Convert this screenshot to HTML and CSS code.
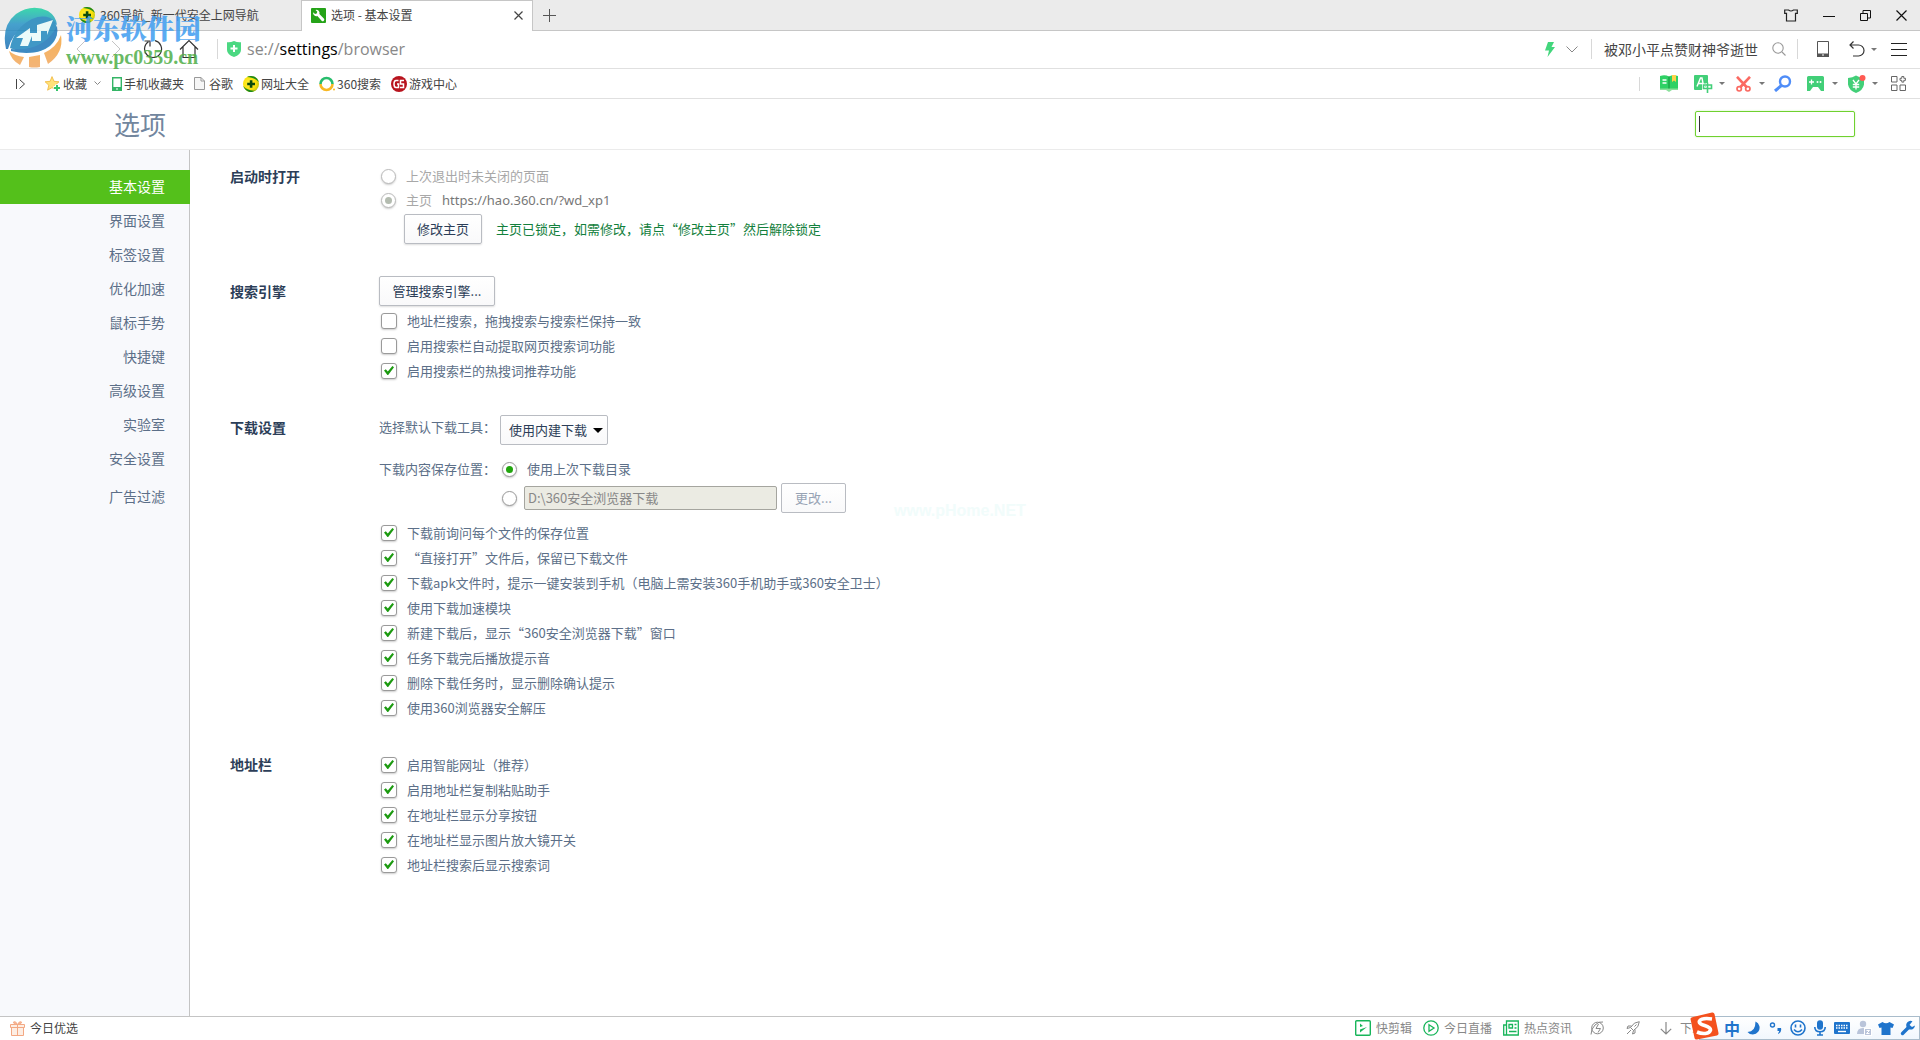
FILE: index.html
```html
<!DOCTYPE html>
<html lang="zh-CN">
<head>
<meta charset="utf-8">
<title>选项 - 基本设置</title>
<link rel="stylesheet" href="styles.css">
</head>
<body>
<svg class="defs" aria-hidden="true">
  <defs>
    <radialGradient id="yel" cx=".4" cy=".45" r=".6"><stop offset="0" stop-color="#fff13a"/><stop offset=".7" stop-color="#fbe00a"/><stop offset="1" stop-color="#c8c814"/></radialGradient>
    <linearGradient id="globe" x1="0" y1="0" x2="0" y2="1"><stop offset="0" stop-color="#1fd6a0"/><stop offset=".4" stop-color="#2a94c8"/><stop offset="1" stop-color="#1c6fb4"/></linearGradient>
    <linearGradient id="sun" x1="0" y1="0" x2="0" y2="1"><stop offset="0" stop-color="#f5a43a"/><stop offset="1" stop-color="#f2a860"/></linearGradient>
    <symbol id="nav360" viewBox="0 0 16 16"><circle cx="8" cy="8" r="8" fill="url(#yel)"/><path d="M4 1.100A8 8 0 0 1 15.800 6C13 2.500 8 1.500 4 1.100z" fill="#1c8a1c"/><path d="M.3 10A8 8 0 0 0 12.500 14.600C7 15 2.500 13 .3 10z" fill="#1c8a1c"/><path d="M6.800 4.200h2.600v2.600H12v2.400H9.400v2.600H6.800V9.200H4.200V6.800h2.600z" fill="#0c4a0c"/></symbol>
  </defs>
</svg>

<header class="tabbar">
  <div class="tab tab-idle">
    <svg width="16" height="16"><use href="#nav360"/></svg>
    <span>360导航_新一代安全上网导航</span>
  </div>
  <div class="tab tab-active">
    <svg width="15" height="15" viewBox="0 0 15 15"><rect width="15" height="15" rx="1" fill="#25a318"/><path d="M2.200 4.200a3.300 3.300 0 0 0 4.200 3.900l4.200 4.600a1.500 1.500 0 0 0 2.200-2.200L8.400 6.100a3.300 3.300 0 0 0-3.900-4.200l1.800 1.900-.6 1.700-1.700.5z" fill="#fff"/></svg>
    <span>选项 - 基本设置</span>
    <button class="icon-btn tab-close" aria-label="关闭标签"><svg width="9" height="9" viewBox="0 0 9 9"><path d="M.5.5l8 8M8.500.5l-8 8" stroke="#444" stroke-width="1.200"/></svg></button>
  </div>
  <button class="icon-btn new-tab" aria-label="新标签"><svg width="13" height="13" viewBox="0 0 13 13"><path d="M6.500 0v13M0 6.500h13" stroke="#555"/></svg></button>
  <div class="window-btns">
    <button class="icon-btn" aria-label="皮肤"><svg width="14" height="13" viewBox="0 0 14 13" fill="none" stroke="#222" stroke-width="1.200"><path d="M.7 1H4.500Q7 3 9.500 1h3.800v3.400h-1.800v7.600h-9V4.400H.7z"/></svg></button>
    <button class="icon-btn" aria-label="最小化"><svg width="12" height="11" viewBox="0 0 12 11"><path d="M0 6.500h12" stroke="#111"/></svg></button>
    <button class="icon-btn" aria-label="还原"><svg width="11" height="11" viewBox="0 0 11 11" fill="none" stroke="#111"><path d="M.5 3.500h7v7h-7zM3 3.500v-3h7.500v7.500h-3"/></svg></button>
    <button class="icon-btn" aria-label="关闭"><svg width="11" height="11" viewBox="0 0 11 11"><path d="M.5.5l10 10M10.500.5l-10 10" stroke="#111" stroke-width="1.200"/></svg></button>
  </div>
</header>

<div class="addressbar">
  <div class="nav-btns">
    <button class="icon-btn" aria-label="后退"><svg width="10" height="18" viewBox="0 0 10 18" fill="none" stroke="#c4c4c4"><path d="M9 1L1 9l8 8"/></svg></button>
    <button class="icon-btn" aria-label="前进"><svg width="10" height="18" viewBox="0 0 10 18" fill="none" stroke="#c4c4c4"><path d="M1 1l8 8-8 8"/></svg></button>
    <button class="icon-btn" aria-label="刷新"><svg width="20" height="20" viewBox="0 0 20 20" fill="none" stroke="#333" stroke-width="1.200"><path d="M12 1.700A8.500 8.500 0 1 1 5.500 2.800M1.500 2H7v5.500"/></svg></button>
    <button class="icon-btn" aria-label="主页"><svg width="20" height="20" viewBox="0 0 20 20" fill="none" stroke="#333" stroke-width="1.200"><path d="M1 10.500L10 1.500l9 9M4 8v10.500h12V8"/></svg></button>
  </div>
  <label class="url">
    <svg width="14" height="16" viewBox="0 0 14 16"><path d="M0 1.200Q3.500 1.600 7 0q3.500 1.600 7 1.200V9q0 4.500-7 7-7-2.500-7-7z" fill="#4bd882"/><path d="M7 4v7M3.500 7.500h7" stroke="#fff" stroke-width="2"/></svg>
    <span>se://<b>settings</b>/browser</span>
  </label>
  <div class="address-tools">
    <button class="icon-btn bolt" aria-label="极速模式"><svg width="10" height="15" viewBox="0 0 10 15"><path d="M3 0h6L6.500 5H10L2.500 15 4 8.500H0z" fill="#42d67c"/></svg></button>
    <button class="icon-btn drop" aria-label="展开"><svg width="12" height="7" viewBox="0 0 12 7" fill="none" stroke="#888"><path d="M.5.5L6 6 11.500.5"/></svg></button>
    <i class="bar-sep"></i>
    <span class="hot-word">被邓小平点赞财神爷逝世</span>
    <button class="icon-btn find" aria-label="搜索"><svg width="14" height="14" viewBox="0 0 14 14" fill="none" stroke="#999" stroke-width="1.100"><circle cx="6" cy="6" r="5.200"/><path d="M10 10l3.500 3.500"/></svg></button>
    <i class="bar-sep"></i>
    <button class="icon-btn phone" aria-label="手机"><svg width="12" height="16" viewBox="0 0 12 16"><path d="M.5.500h11v15H.5z" fill="none" stroke="#555"/><path d="M0 12.500h12V16H0z" fill="#555"/><path d="M5 14h2" stroke="#fff"/></svg></button>
    <button class="icon-btn undo" aria-label="恢复"><svg width="16" height="16" viewBox="0 0 16 16" fill="none" stroke="#333" stroke-width="1.200"><path d="M4.500.5L1 4l3.500 3.500M1 4h8.500a5.500 5.500 0 0 1 0 11H4"/></svg></button>
    <i class="caret"></i>
    <button class="icon-btn menu" aria-label="菜单"><svg width="16" height="13" viewBox="0 0 16 13"><path d="M0 .5h16M0 6.500h16M0 12.500h16" stroke="#222"/></svg></button>
  </div>
</div>

<nav class="bookmarks">
  <button class="icon-btn fold" aria-label="收起"><svg width="10" height="12" viewBox="0 0 10 12" fill="none" stroke="#444"><path d="M.5 1v10M3.500 1.500L8.500 6l-5 4.500"/></svg></button>
  <a href="#" class="fav"><svg width="16" height="16" viewBox="0 0 16 16"><path d="M7 .6l2 4.700 5 .5-3.800 3.400 1.200 5L7 11.600l-4.400 2.600 1.200-5L.1 5.800l5-.5z" fill="#ffe27a" stroke="#f0b53a" stroke-width=".8"/><path d="M12 8.500v7M8.500 12h7" stroke="#fff" stroke-width="4"/><path d="M12 9v6M9 12h6" stroke="#35c46a" stroke-width="2"/></svg>收藏</a>
  <svg class="fav-drop" width="7" height="5" viewBox="0 0 7 5" fill="none" stroke="#888"><path d="M.5.500l3 3 3-3"/></svg>
  <a href="#" class="mobile"><svg width="10" height="14" viewBox="0 0 10 14"><path d="M.7.700h8.600v12.600H.7z" fill="#fff" stroke="#35b566" stroke-width="1.400"/><path d="M0 10h10v4H0z" fill="#35b566"/><path d="M4 12h2" stroke="#fff"/></svg>手机收藏夹</a>
  <a href="#" class="doc"><svg width="11" height="13" viewBox="0 0 11 13" fill="#f6f6f6" stroke="#999"><path d="M.5.500h6.500l3.500 3.500v8.500H.5zM7 .5V4h3.500"/></svg>谷歌</a>
  <a href="#"><svg width="16" height="16"><use href="#nav360"/></svg>网址大全</a>
  <a href="#"><svg width="16" height="16" viewBox="0 0 16 16" fill="none" stroke-width="2.600"><path d="M1.500 8a6 6 0 1 1 12 0" stroke="#28bd6c"/><path d="M1.500 8a6 6 0 0 0 12 0" stroke="#f8b824"/><circle cx="15" cy="13.500" r="1" fill="#f8b824" stroke="none"/></svg>360搜索</a>
  <a href="#"><svg width="16" height="16" viewBox="0 0 16 16"><circle cx="8" cy="8" r="8" fill="#b8141e"/><path d="M7.500 4.500H5Q3 4.500 3 8t2 3.500h2.500V8H6M13 4.500H9.500V8h3v3.500H9" fill="none" stroke="#fff" stroke-width="1.500"/></svg>游戏中心</a>
  <div class="ext">
    <i class="bar-sep short"></i>
    <button class="icon-btn e-book" aria-label="小说"><svg width="18" height="17" viewBox="0 0 18 17"><path d="M0 1q5-1.500 9 .5 4-2 9-.5v13h-6q-2 0-3 2-1-2-3-2H0z" fill="#2fd165"/><path d="M0 13.500h18V15h-6l-3 2-3-2H0z" fill="#8be09c"/><path d="M9 1.500v12" stroke="#14913c" stroke-width="1"/><path d="M2.500 5h4M2.500 8h4" stroke="#fff" stroke-width="1.400"/><path d="M12 0h4v7l-2-1.500L12 7z" fill="#ffd24a"/></svg></button>
    <button class="icon-btn e-trans" aria-label="翻译"><svg width="19" height="18" viewBox="0 0 19 18" fill="none"><rect width="14" height="15" rx="1" fill="#42cf78"/><path d="M3 11.500L6.500 3h1.500l1.500 8M4.500 8.500h5" stroke="#fff" stroke-width="1.400"/><path d="M13.500 8v10M9.500 10h8v3.500h-8z" stroke="#fff" stroke-width="3"/><path d="M13.500 7.500V18M9.500 10h8v3.500h-8z" stroke="#42cf78" stroke-width="1.600"/></svg></button>
    <i class="caret"></i>
    <button class="icon-btn e-cut" aria-label="截图"><svg width="15" height="16" viewBox="0 0 15 16" fill="none" stroke="#fb6a62"><path d="M1 .8L11 11.500M14 .8L4 11.500" stroke-width="2.600"/><circle cx="3.200" cy="12.800" r="2.200" stroke-width="1.700"/><circle cx="11.800" cy="12.800" r="2.200" stroke-width="1.700"/></svg></button>
    <i class="caret"></i>
    <button class="icon-btn e-mag" aria-label="放大镜"><svg width="18" height="17" viewBox="0 0 18 17" fill="none" stroke="#4f8df8"><circle cx="11" cy="6.500" r="5" stroke-width="2.400"/><path d="M7.300 10.500L1 16" stroke-width="3"/></svg></button>
    <button class="icon-btn e-game" aria-label="游戏"><svg width="17" height="15" viewBox="0 0 17 15"><path d="M1.500 0h14Q17 0 17 1.500V15h-3l-3-4H6l-3 4H0V1.500Q0 0 1.500 0z" fill="#42cf78"/><path d="M4.500 3.500v5M2 6h5" stroke="#fff" stroke-width="1.300"/><circle cx="10.500" cy="6" r="1" fill="#fff"/><circle cx="13.500" cy="6" r="1" fill="#fff"/></svg></button>
    <i class="caret"></i>
    <button class="icon-btn e-pay" aria-label="网购先赔"><svg width="18" height="18" viewBox="0 0 18 18"><path d="M0 3q4.500-.3 8-2.500Q11.500 2.700 16 3v6.500Q15 15.500 8 18 1 15.500 0 9.500z" fill="#42cf78"/><path d="M5 5l3 4 3-4M8 9v5.500M4.800 9.500h6.400M4.800 12h6.400" fill="none" stroke="#fff" stroke-width="1.300"/><circle cx="14.500" cy="3" r="3" fill="#ff5a52"/></svg></button>
    <i class="caret"></i>
    <button class="icon-btn e-grid" aria-label="扩展中心"><svg width="15" height="15" viewBox="0 0 15 15" fill="none" stroke="#666"><path d="M.5.500h5.500V6H.5zM.5 9h5.500v5.500H.5zM9 9h5.500v5.500H9zM10.800.500h2v1.800h1.800v2h-1.800v1.800h-2V4.300H9v-2h1.800z"/></svg></button>
  </div>
</nav>

<header class="page-head">
  <h1>选项</h1>
  <input class="search" type="search" aria-label="搜索设置">
</header>

<div class="body">
  <aside class="sidebar">
    <a href="#" class="current">基本设置</a>
    <a href="#">界面设置</a>
    <a href="#">标签设置</a>
    <a href="#">优化加速</a>
    <a href="#">鼠标手势</a>
    <a href="#">快捷键</a>
    <a href="#">高级设置</a>
    <a href="#">实验室</a>
    <a href="#">安全设置</a>
    <a href="#" class="extra">广告过滤</a>
  </aside>

  <main class="content">
    <section>
      <h2>启动时打开</h2>
      <div>
        <label class="radio-row muted"><input type="radio" name="start" disabled>上次退出时未关闭的页面</label>
        <label class="radio-row muted"><input type="radio" name="start" disabled checked>主页<span class="home-url">https://hao.360.cn/?wd_xp1</span></label>
        <div class="home-row"><button class="btn">修改主页</button><span class="hint">主页已锁定，如需修改，请点“修改主页”然后解除锁定</span></div>
      </div>
    </section>

    <section>
      <h2 class="tall">搜索引擎</h2>
      <div>
        <button class="btn wide">管理搜索引擎...</button>
        <div class="checks after-btn">
          <label><input type="checkbox">地址栏搜索，拖拽搜索与搜索栏保持一致</label>
          <label><input type="checkbox">启用搜索栏自动提取网页搜索词功能</label>
          <label><input type="checkbox" checked>启用搜索栏的热搜词推荐功能</label>
        </div>
      </div>
    </section>

    <section>
      <h2>下载设置</h2>
      <div>
        <div class="field-row tool-row">
          <label class="field-label" for="tool">选择默认下载工具：</label>
          <span class="select-wrap"><select id="tool"><option>使用内建下载</option></select></span>
        </div>
        <div class="field-row">
          <span class="field-label">下载内容保存位置：</span>
          <label class="pick"><input type="radio" name="dir" checked>使用上次下载目录</label>
        </div>
        <div class="field-row dir-row">
          <span class="field-label"></span>
          <input type="radio" name="dir" aria-label="指定目录">
          <input class="path" type="text" value="D:\360安全浏览器下载" aria-label="下载目录" disabled>
          <button class="btn small" disabled>更改...</button>
        </div>
        <div class="checks after-dir">
          <label><input type="checkbox" checked>下载前询问每个文件的保存位置</label>
          <label><input type="checkbox" checked>“直接打开”文件后，保留已下载文件</label>
          <label><input type="checkbox" checked>下载apk文件时，提示一键安装到手机（电脑上需安装360手机助手或360安全卫士）</label>
          <label><input type="checkbox" checked>使用下载加速模块</label>
          <label><input type="checkbox" checked>新建下载后，显示“360安全浏览器下载”窗口</label>
          <label><input type="checkbox" checked>任务下载完后播放提示音</label>
          <label><input type="checkbox" checked>删除下载任务时，显示删除确认提示</label>
          <label><input type="checkbox" checked>使用360浏览器安全解压</label>
        </div>
      </div>
    </section>

    <section>
      <h2>地址栏</h2>
      <div class="checks">
        <label><input type="checkbox" checked>启用智能网址（推荐）</label>
        <label><input type="checkbox" checked>启用地址栏复制粘贴助手</label>
        <label><input type="checkbox" checked>在地址栏显示分享按钮</label>
        <label><input type="checkbox" checked>在地址栏显示图片放大镜开关</label>
        <label><input type="checkbox" checked>地址栏搜索后显示搜索词</label>
      </div>
    </section>
  </main>
</div>

<footer class="status">
  <a href="#" class="today"><svg width="15" height="15" viewBox="0 0 15 15" fill="#fdeee4" stroke="#f3a883"><path d="M1.500 6.500h12v8h-12zM.5 3.500h14v3H.5zM7.500 3.500v11"/><path d="M7.500 3.500Q3 3 3.500 1q2-1.500 4 2.500 2-4 4-2.500.5 2-4 2.500z" fill="#f9c4a8"/></svg>今日优选</a>
  <div class="status-right">
    <a href="#"><svg width="16" height="16" viewBox="0 0 16 16" fill="none" stroke="#18b55a" stroke-width="1.400"><rect x=".7" y=".7" width="14.600" height="14.600" rx="1"/><path d="M5 3.500l3 2.500-3 1zM5 12.500V9.500l7-2.500z" fill="#18b55a" stroke="none"/></svg>快剪辑</a>
    <a href="#"><svg width="16" height="16" viewBox="0 0 16 16" fill="none" stroke="#18b55a" stroke-width="1.300"><circle cx="8" cy="8" r="7.200"/><path d="M6 4.800L11 8l-5 3.200z"/></svg>今日直播</a>
    <a href="#"><svg width="16" height="16" viewBox="0 0 16 16" fill="none" stroke="#18b55a" stroke-width="1.300"><path d="M3.500 1h11.800v14H.7V5h2.800zM3.500 5v10M6 4.500h3.500V8H6zM11.500 4.500h2M11.500 8h2M6 11.500h7.500"/></svg>热点资讯</a>
    <button class="icon-btn" aria-label="加速器"><svg width="14" height="14" viewBox="0 0 14 14" fill="none" stroke="#888"><circle cx="7.500" cy="7" r="5.800"/><path d="M1 13.500Q1 8 5 4t8-3M8.500 3L6 7.500h4.500L8 11.500"/></svg></button>
    <button class="icon-btn rocket" aria-label="火箭"><svg width="14" height="14" viewBox="0 0 14 14" fill="none" stroke="#888"><path d="M13.300.700Q8 .7 4.500 6.500l3 3Q13.300 6 13.300.700zM5.500 5H2L1 7.500l3.500-1M9 8.500V12l-2.500 1 1-3.500M1 13l4-4M10.500 3.500l-2 2"/></svg></button>
    <a href="#" class="dl"><svg width="12" height="13" viewBox="0 0 12 13" fill="none" stroke="#888" stroke-width="1.200"><path d="M6 0v12M.8 6.800L6 12l5.200-5.200"/></svg>下载</a>
  </div>
</footer>

<div class="ime">
  <svg class="ime-logo" width="29" height="28" viewBox="0 0 29 28"><path d="M3 5L22 .5q2-.4 2.500 1.500l4 19q.3 2-1.500 2.500L7 27.500q-2 .4-2.500-1.500l-4-19Q.3 5.600 3 5z" fill="#f4511e"/><path d="M22 7q-10-1.500-12.500 2c-2 5 11.500 4 11 9-1 4-8 4.500-13.500 2" fill="none" stroke="#fff" stroke-width="3.600"/></svg>
  <div class="ime-bar">
    <span class="ime-mode">中</span>
    <svg width="16" height="16" viewBox="0 0 16 16"><path d="M9.500 1.500A6.800 6.800 0 1 1 1.500 12Q9.500 12 9.500 1.500z" fill="#1f74cc"/></svg>
    <svg width="16" height="16" viewBox="0 0 16 16"><circle cx="4.500" cy="5" r="2" fill="none" stroke="#1f74cc" stroke-width="1.400"/><path d="M9.500 8h3.500q1 4-2.500 6l-.5-1q1.500-1 1-2H9.500z" fill="#1f74cc"/></svg>
    <svg width="16" height="16" viewBox="0 0 16 16" fill="none" stroke="#1f74cc" stroke-width="1.600"><circle cx="8" cy="8" r="7"/><path d="M5.500 4.500v3M10.500 4.500v3M4 9.500q4 4.500 8 0"/></svg>
    <svg width="16" height="16" viewBox="0 0 16 16" fill="none" stroke="#1f74cc" stroke-width="1.600"><rect x="5.800" y="1" width="4.400" height="8" rx="2.200" fill="#1f74cc"/><path d="M2.800 7q0 4.800 5.200 4.800T13.200 7M8 12v3M5 15h6"/></svg>
    <svg width="16" height="16" viewBox="0 0 16 16"><rect x="0" y="2" width="16" height="12" rx="1" fill="#1f74cc"/><path d="M2 5.500h12M2 8h12" stroke="#fff" stroke-width="1.400" stroke-dasharray="1.500 1"/><path d="M4 11.500h8" stroke="#fff" stroke-width="1.400"/></svg>
    <svg width="16" height="16" viewBox="0 0 16 16"><circle cx="7" cy="4" r="3.200" fill="#b9c4da"/><path d="M1 14q0-6 6-6t6 6z" fill="#b9c4da"/><rect x="8.500" y="8.500" width="7" height="7" fill="#b9c4da" stroke="#fff"/><path d="M10.500 10.500h3l-3 3h3" fill="none" stroke="#fff"/></svg>
    <svg width="16" height="16" viewBox="0 0 16 16"><path d="M4.500 2Q8 4.500 11.500 2L16 4.500 14.500 8l-2-.5V15h-9V7.500l-2 .5L0 4.500z" fill="#1f74cc"/></svg>
    <svg width="16" height="16" viewBox="0 0 16 16"><path d="M2.500 13.500L9 7" stroke="#1f74cc" stroke-width="3.400" stroke-linecap="round"/><path d="M12.500 1.200A4.400 4.400 0 1 0 15 5.500L12 7 9.500 5z" fill="#1f74cc"/></svg>
  </div>
</div>

<div class="site-mark">
  <svg width="60" height="62" viewBox="0 0 60 62">
    <path d="M2 43Q-3 20 12 8 28-3 44 5q8 5 9 14Q38 9 21 20 8 28 4 43z" fill="url(#globe)"/>
    <path d="M6 42Q10 22 28 13 43 7 51 16q6 14-5 24-16 12-40 2z" fill="#1f87bd"/>
    <path d="M12 32L26 22v5h7v-8l16-5-6 15v-4h-6v10h-9v-5l-4 10h-8l3-8z" fill="#e9fbfa"/>
    <path d="M7 43Q40 46 53 20q2 10-6 18Q34 51 7 45z" fill="#1d76b8"/>
    <path d="M5 45q6 5 15 6l-4 8Q7 54 5 45zM25 51l11-2v12q-6 1-11 0zM40 47Q53 41 57 29q3 18-13 29z" fill="url(#sun)"/>
  </svg>
  <div class="mark-text"><span class="mark-name">河东软件园</span><span class="mark-url">www.pc0359.cn</span></div>
</div>
<div class="faint-mark">www.pHome.NET</div>
</body>
</html>
```
FILE: styles.css
```css
* { box-sizing: border-box; }

body {
  margin: 0;
  min-height: 100vh;
  display: flex;
  flex-direction: column;
  position: relative;
  overflow-x: hidden;
  background: #fff;
  color: #5c6f88;
  font: 13px/24px "Noto Sans CJK SC", "Noto Sans", sans-serif;
}

a { color: inherit; text-decoration: none; }
button, input, select { font: inherit; }
svg { display: block; flex: none; }
.defs { position: absolute; width: 0; height: 0; }

.icon-btn {
  display: flex;
  flex: none;
  padding: 0;
  border: 0;
  background: none;
}

/* window tabs */
.tabbar {
  display: flex;
  height: 31px;
  background: #ebebeb;
  color: #444;
  font-size: 12px;
  box-shadow: inset 0 -1px #c6c6c6;
}
.tab { display: flex; align-items: center; gap: 5px; }
.tab-idle { width: 301px; padding-left: 79px; padding-bottom: 2px; }
.tab-active {
  width: 232px;
  padding: 0 9px 2px;
  border: 1px solid #c6c6c6;
  border-bottom: 0;
  background: #fff;
}
.tab-close { margin-left: auto; }
.new-tab { margin-left: 10px; align-self: center; }
.window-btns {
  display: flex;
  align-items: center;
  gap: 25px;
  margin-left: auto;
  padding-right: 13px;
}

/* address bar */
.addressbar {
  display: flex;
  align-items: center;
  height: 38px;
  padding-bottom: 1px;
  border-bottom: 1px solid #e0e0e0;
}
.nav-btns {
  display: flex;
  align-items: center;
  gap: 16px;
  width: 218px;
  height: 20px;
  padding-left: 76px;
  border-right: 1px solid #d8d8d8;
}
.nav-btns button:nth-child(2) { margin: 0 6px 0 9px; }
.url {
  display: flex;
  align-items: center;
  gap: 6px;
  flex: 1;
  padding-left: 9px;
  color: #888;
  font: 16px/24px "Open Sans", "Noto Sans CJK SC", sans-serif;
}
.url b { color: #000; font-weight: 400; }
.address-tools { display: flex; align-items: center; padding-right: 13px; }
.bar-sep { width: 1px; height: 20px; background: #d8d8d8; }
.bar-sep.short { height: 14px; }
.drop { margin: 0 13px 0 11px; }
.hot-word { margin: 0 14px 0 12px; color: #444; font-size: 14px; }
.find { margin-right: 11px; }
.phone { margin: 0 20px 0 19px; }
.caret {
  border: 3px solid transparent;
  border-top-color: #777;
  border-bottom: 0;
}
.undo { margin-right: 6px; }
.menu { margin-left: 14px; }

/* bookmarks */
.bookmarks {
  display: flex;
  align-items: center;
  height: 30px;
  padding: 0 14px 0 16px;
  border-bottom: 1px solid #e0e0e0;
  color: #444;
  font-size: 12px;
}
.bookmarks > a { display: flex; align-items: center; gap: 2px; margin-right: 10px; }
.fold { margin-right: 19px; }
.bookmarks > .fav { margin-right: 7px; }
.fav-drop { margin-right: 11px; }
.bookmarks > .doc { gap: 4px; }
.ext { display: flex; align-items: center; margin-left: auto; }
.e-book { margin: 0 16px 0 20px; }
.e-trans { margin-right: 6px; }
.e-cut { margin: 0 8px 0 11px; }
.e-mag { margin: 0 15px 0 9px; }
.e-game { margin-right: 8px; }
.e-pay { margin: 0 6px 0 10px; }
.e-grid { margin-left: 13px; }

/* page heading */
.page-head {
  display: flex;
  justify-content: space-between;
  align-items: center;
  height: 51px;
  padding: 0 65px 0 114px;
  border-bottom: 1px solid #ebebeb;
}
h1 { margin: 0; color: #72869e; font-size: 26px; font-weight: 400; line-height: 40px; }
.search {
  width: 160px;
  height: 26px;
  padding: 0 4px;
  border: 1px solid #6fd12f;
  border-radius: 2px;
  outline: 0;
  background: linear-gradient(#333, #333) 3px 4px / 1px 16px no-repeat #fff;
  box-shadow: 0 0 2px #c8efae;
}

/* main layout */
.body { display: flex; flex: 1; }
.sidebar {
  flex: none;
  width: 190px;
  padding-top: 20px;
  background: #f8f9fc;
  box-shadow: inset -1px 0 #c4c4c4;
  font-size: 14px;
  line-height: 32px;
}
.sidebar a { display: block; padding: 0 25px 2px 0; text-align: right; }
.sidebar .current { background: #54c01b; color: #fff; }
.sidebar .extra { margin-top: 4px; }

.content {
  flex: 1;
  display: flex;
  flex-direction: column;
  gap: 32px;
  padding: 14px 40px;
}
section { display: grid; grid-template-columns: 149px 1fr; }
h2 { margin: 0; color: #2c3e58; font-size: 14px; font-weight: 700; line-height: 24px; }
h2.tall { line-height: 30px; }

input[type="radio"], input[type="checkbox"] {
  appearance: none;
  flex: none;
  display: grid;
  place-items: center;
  margin: 0;
  border: 1px solid #9a9a9a;
  background: #fff;
  box-shadow: 0 1px 2px #ccc;
}
input[type="radio"] { width: 15px; height: 15px; border-radius: 50%; }
input[type="radio"]:checked::before {
  content: "";
  width: 7px;
  height: 7px;
  border-radius: 50%;
  background: #22a50e;
}
input[type="radio"]:disabled { border-color: #bbb; }
input[type="radio"]:disabled::before { background: #b4bcb0; }
input[type="checkbox"] { width: 16px; height: 16px; border-radius: 3px; }
input[type="checkbox"]:checked::before {
  content: "";
  width: 10px;
  height: 9px;
  background: #1c9a10;
  clip-path: polygon(0 50%, 18% 36%, 38% 62%, 84% 0, 100% 14%, 42% 100%, 34% 100%);
}

.radio-row { display: flex; align-items: center; gap: 10px; padding-left: 2px; }
.muted { color: #a8a8a8; }
.home-url { color: #777; font-family: "Noto Sans", sans-serif; }
.home-row { display: flex; align-items: center; gap: 14px; padding: 2px 0 0 25px; }
.hint { color: #12803c; }

.btn {
  height: 30px;
  padding: 0 12px;
  border: 1px solid #b9bcc2;
  border-radius: 2px;
  background: linear-gradient(#fff, #f9f9fa);
  box-shadow: 0 1px 2px #ddd;
  color: #2c3e58;
}
.btn.wide { display: block; width: 116px; padding: 0; }
.btn.small { width: 65px; }
.btn:disabled { color: #97a3b4; box-shadow: none; }

.checks label { display: flex; align-items: center; gap: 10px; height: 25px; padding-left: 2px; }
.after-btn { margin-top: 2px; }
.after-dir { margin-top: 7px; }

.field-row { display: flex; align-items: center; }
.tool-row { align-items: flex-start; margin-bottom: 12px; }
.field-label { width: 121px; white-space: nowrap; }
.select-wrap { display: grid; align-items: center; }
.select-wrap::after {
  content: "";
  grid-area: 1 / 1;
  justify-self: end;
  margin-right: 5px;
  border: 5px solid transparent;
  border-top-color: #000;
  border-bottom: 0;
  pointer-events: none;
}
select {
  grid-area: 1 / 1;
  appearance: none;
  width: 108px;
  height: 30px;
  padding: 0 8px;
  border: 1px solid #b9bcc2;
  border-radius: 2px;
  background: linear-gradient(#fff, #f9f9fa);
  color: #2c3e58;
}
.pick { display: flex; align-items: center; gap: 10px; padding-left: 2px; }
.dir-row { padding-top: 2px; }
.dir-row input[type="radio"] { margin: 0 7px 0 2px; }
.path {
  width: 253px;
  height: 24px;
  margin-right: 4px;
  padding: 0 3px;
  border: 1px solid #a5a59f;
  border-radius: 2px;
  background: #ebebe3;
  color: #888;
}

/* status bar */
.status {
  display: flex;
  justify-content: space-between;
  align-items: center;
  height: 24px;
  padding: 0 0 1px 10px;
  border-top: 1px solid #c4c4c4;
  color: #444;
  font-size: 12px;
  line-height: 20px;
}
.status a { display: flex; align-items: center; gap: 5px; }
.status-right { display: flex; align-items: center; gap: 11px; padding-right: 216px; color: #888; }
.status-right .icon-btn { margin-left: 7px; }
.status-right .rocket { margin-left: 11px; }
.status-right .dl { margin-left: 9px; gap: 8px; }

/* floating input-method bar */
.ime { position: absolute; right: 0; bottom: 0; display: flex; align-items: flex-end; }
.ime-logo { margin-right: -20px; z-index: 1; }
.ime-bar {
  display: flex;
  align-items: center;
  gap: 6px;
  height: 24px;
  padding: 0 3px 0 24px;
  border: 1px solid #a9bccb;
  background: linear-gradient(#fff, #f1f7fd);
}
.ime-mode { width: 16px; color: #1f74cc; font-size: 16px; font-weight: 700; line-height: 20px; }

/* site watermark */
.site-mark { position: absolute; left: 4px; top: 6px; display: flex; opacity: .85; pointer-events: none; }
.mark-text { display: flex; flex-direction: column; padding-top: 7px; margin-left: 2px; }
.mark-name {
  color: #3f9df0;
  font: 900 27px/30px "Noto Serif CJK SC", "Noto Sans CJK SC", serif;
}
.mark-url { color: #4fae48; font: bold 20px/28px "Liberation Serif", serif; }
.faint-mark {
  position: absolute;
  left: 894px;
  top: 501px;
  color: #f1fcfb;
  font: bold 16px/20px "Liberation Sans", sans-serif;
}
```
